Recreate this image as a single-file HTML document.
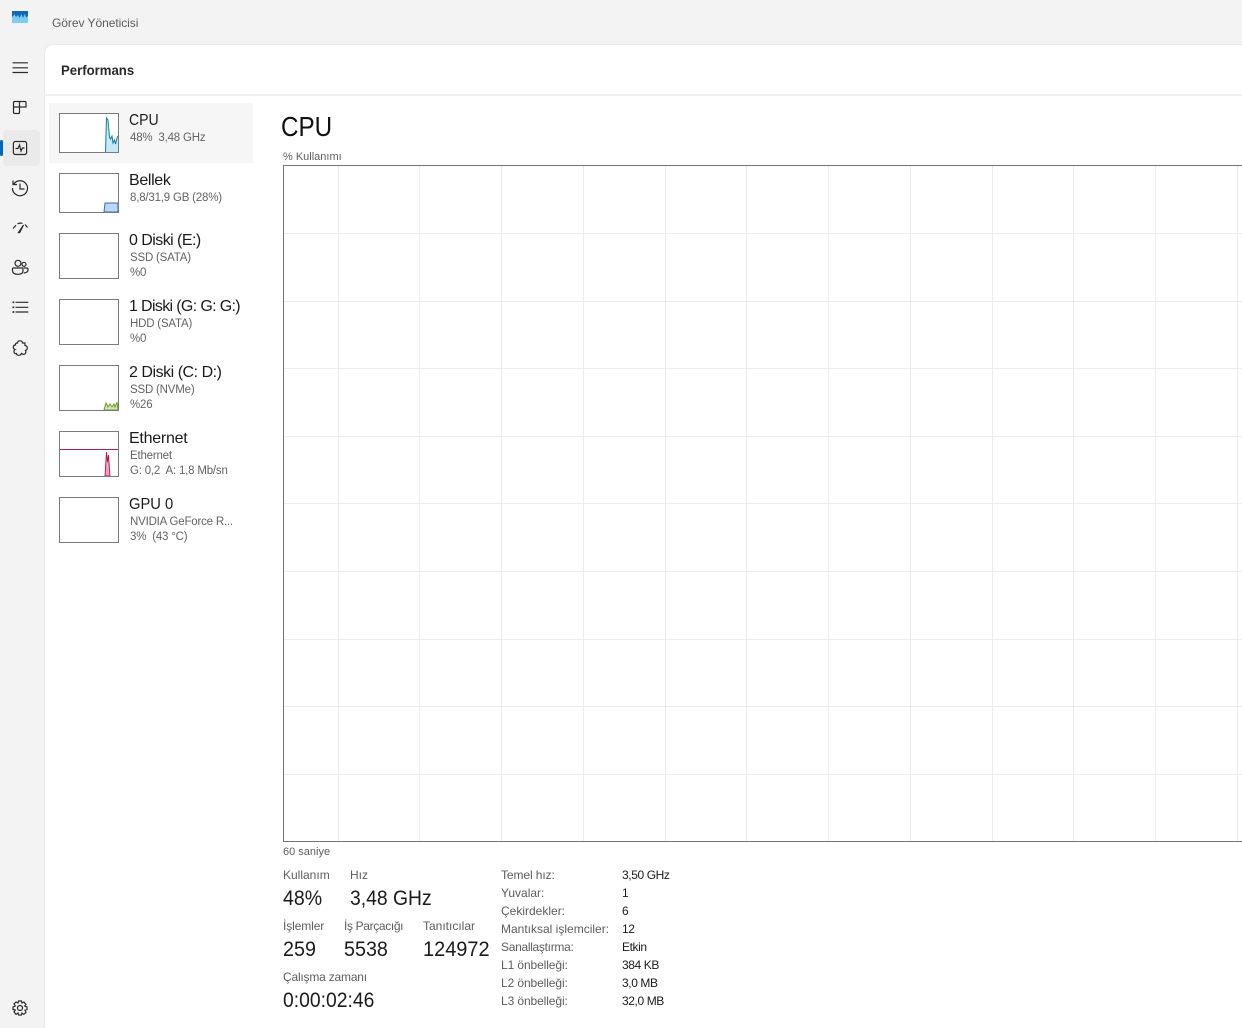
<!DOCTYPE html>
<html lang="tr"><head><meta charset="utf-8"><title>Görev Yöneticisi</title>
<style>
html,body{margin:0;padding:0;width:1242px;height:1028px;overflow:hidden;background:#f3f3f3}
body{position:relative;font-family:"Liberation Sans","DejaVu Sans",sans-serif;color:#1a1a1a}
.t{position:absolute;white-space:pre;line-height:1;transform-origin:left center}
.g{color:#636363;font-size:11.500px;letter-spacing:-.2px}
.n{font-size:16px;color:#1b1b1b}
.v{font-size:21px;color:#1b1b1b}
.l{font-size:12px;color:#5d5d5d}
.r{font-size:12px;color:#1b1b1b;letter-spacing:-.4px}
.thumb{position:absolute;left:59px;width:58px;background:#fff;border:1px solid #7a7a7a;overflow:hidden}
#main{position:absolute;left:45px;top:45px;width:1197px;height:983px;background:#fff;border-top-left-radius:8px;box-shadow:0 0 0 1px #e9e9e9}
svg.ic{position:absolute;left:10px;width:20px;height:20px;fill:none;stroke:#2b2b2b;stroke-width:1.2}
</style></head><body>
<svg style="position:absolute;left:12px;top:11px" width="16" height="12" viewBox="0 0 16 12"><rect width="16" height="12" fill="#7ccbf5"/><path d="M0 0H16V5L14 6.500 13 3 11 7 9.500 3 7.500 7 6 4 4 6 2.500 3.500 0 6Z" fill="#1469b5"/></svg>
<span class="t" style="left:52px;top:17px;font-size:12px;color:#5c5c5c;letter-spacing:-.05px">Görev Yöneticisi</span>

<div style="position:absolute;left:3px;top:130px;width:37px;height:36px;background:#eaeaea;border-radius:4px"></div>
<div style="position:absolute;left:0;top:140px;width:3px;height:16px;background:#0067c0;border-radius:2px"></div>

<svg class="ic" style="top:58px" viewBox="0 0 20 20"><path d="M2.500 4.800H18M2.500 9.800H18M2.500 14.500H18"/></svg>
<svg class="ic" style="top:97px" viewBox="0 0 20 20"><path d="M3.500 5.500Q3.500 4.500 5 4.500H15Q16 4.500 16 5.500V10H3.500ZM3.500 10V15.500Q3.500 16.500 5 16.500H8.500Q9.500 16.500 9.500 15.500V4.500"/></svg>
<svg class="ic" style="top:138px" viewBox="0 0 20 20"><rect x="3.400" y="3.500" width="13.200" height="13" rx="2"/><path d="M5.500 10.500H8L9.500 7 11 13 12.500 10H14.500"/></svg>
<svg class="ic" style="top:178px" viewBox="0 0 20 20"><path d="M3 2.500V6.500H7M3.500 6.500A7.500 7.500 0 1 1 2.500 10M10 5.500V11H14.500"/></svg>
<svg class="ic" style="top:217px" viewBox="0 0 20 20"><path d="M3 11.500L6 8.300M7.500 6.800Q10 5.800 12.500 6.300M15 7.500L17.500 10.500M8.500 15.500L9.700 15.500L13.500 8L8.500 15.500Z"/></svg>
<svg class="ic" style="top:258px" viewBox="0 0 20 20"><circle cx="8" cy="5.300" r="3"/><circle cx="14" cy="6.300" r="2"/><path d="M3.500 10H13V13Q13 16.300 8 16.300T2.500 13V11Q2.500 10 3.500 10ZM14 10H16.800Q18 10 18 11.500V12Q18 14.500 13.800 15"/></svg>
<svg class="ic" style="top:298px" viewBox="0 0 20 20"><path d="M5.500 4.300H18.300M5.500 9.300H18.300M5.500 14H18.300"/><path d="M2.500 4.300H4.300M2.500 9.300H4.300M2.500 14H4.300" stroke-width="1.700"/></svg>
<svg class="ic" style="top:338px" viewBox="0 0 20 20"><path d="M7.500 5Q7.500 2.800 10 2.800T12.500 5H15V7.500Q17.300 8 17.300 10T15.500 12.500Q16.500 15 14.800 16T11.500 15.500Q10.500 17.500 8.500 17.300T6.500 15.500Q4.300 16 4 14T5 11.500Q3.300 11 3.300 9T5.500 7Q5 5 7.500 5Z"/></svg>
<svg class="ic" style="top:998px" viewBox="0 0 20 20"><circle cx="10" cy="10" r="2.500"/><path d="M8.500 3H11.500L12 5L14 4L16 6.500L14.700 8L17 9V11.500L15 12L16 14.500L13.800 16.300L12 15L11.500 17H8.500L8 15L6 16.300L4 14L5.300 12L3 11.500V9L5.300 8L4 6L6 4L8 5Z"/></svg>

<div id="main"></div>
<div style="position:absolute;left:45px;top:94px;width:1197px;height:2px;background:#efefef"></div>
<span class="t" style="left:61px;top:63px;font-size:14px;font-weight:bold;color:#2a2a2a;transform:scaleX(.94)">Performans</span>

<div style="position:absolute;left:49px;top:103px;width:204px;height:60px;background:#f6f6f6"></div>

<div class="thumb" style="top:113px;height:38px"><svg width="58" height="38" style="display:block"><path d="M45.500 38L46.500 4 48 6 49.500 23 50.500 25 52 22 53 29 54.500 26 55.500 30 57 24 58 22V38Z" fill="#c6e9f6"/><path d="M45.500 38L46.500 4 48 6 49.500 23 50.500 25 52 22 53 29 54.500 26 55.500 30 57 24 58 22" fill="none" stroke="#117d9c"/></svg></div>
<div class="thumb" style="top:173px;height:38px"><svg width="58" height="38" style="display:block"><path d="M44 38L45 29H58V38Z" fill="#bcd7f5" stroke="#2c6fb5"/></svg></div>
<div class="thumb" style="top:233px;height:44px"></div>
<div class="thumb" style="top:299px;height:44px"></div>
<div class="thumb" style="top:365px;height:44px"><svg width="58" height="44" style="display:block"><path d="M44 44L46 37 48 41 50 38 52 41 54 38 55 41 57 36 58 44Z" fill="#d5e8b4" stroke="#6d9a28"/></svg></div>
<div class="thumb" style="top:431px;height:44px"><svg width="58" height="44" style="display:block"><rect x="0" y="17" width="58" height="1" fill="#b01a66"/><path d="M45 44L46.500 20 47.500 30 48.500 23 50 44Z" fill="#e9a6c4" stroke="#b8144f" stroke-width=".9"/></svg></div>
<div class="thumb" style="top:497px;height:44px"></div>

<span class="t n" style="left:129px;top:113px;transform:scaleX(.88)">CPU</span><span class="t g" style="left:130px;top:133px">48%  3,48 GHz</span>
<span class="t n" style="left:129px;top:173px;letter-spacing:-.35px">Bellek</span><span class="t g" style="left:130px;top:193px">8,8/31,9 GB (28%)</span>
<span class="t n" style="left:129px;top:233px;letter-spacing:-.55px">0 Diski (E:)</span><span class="t g" style="left:130px;top:253px">SSD (SATA)</span><span class="t g" style="left:130px;top:268px">%0</span>
<span class="t n" style="left:129px;top:299px;letter-spacing:-.65px">1 Diski (G: G: G:)</span><span class="t g" style="left:130px;top:319px">HDD (SATA)</span><span class="t g" style="left:130px;top:334px">%0</span>
<span class="t n" style="left:129px;top:365px;letter-spacing:-.47px">2 Diski (C: D:)</span><span class="t g" style="left:130px;top:385px">SSD (NVMe)</span><span class="t g" style="left:130px;top:400px">%26</span>
<span class="t n" style="left:129px;top:431px;letter-spacing:-.25px">Ethernet</span><span class="t g" style="left:130px;top:451px">Ethernet</span><span class="t g" style="left:130px;top:466px">G: 0,2  A: 1,8 Mb/sn</span>
<span class="t n" style="left:129px;top:497px;transform:scaleX(.92)">GPU 0</span><span class="t g" style="left:130px;top:517px">NVIDIA GeForce R...</span><span class="t g" style="left:130px;top:532px">3%  (43 °C)</span>

<span class="t" style="left:281px;top:113px;font-size:28px;color:#111;transform:scaleX(.865)">CPU</span>
<span class="t" style="left:283px;top:152px;font-size:11px;color:#5d5d5d">% Kullanımı</span>

<svg style="position:absolute;left:283px;top:165px" width="959" height="677" viewBox="283 165 959 677">
<path d="M338.500 165V841M419.500 165V841M501.500 165V841M583.500 165V841M665.500 165V841M746.500 165V841M828.500 165V841M910.500 165V841M992.500 165V841M1073.500 165V841M1155.500 165V841M1237.500 165V841M283 233.500H1242M283 301.500H1242M283 368.500H1242M283 436.500H1242M283 503.500H1242M283 571.500H1242M283 639.500H1242M283 706.500H1242M283 774.500H1242" stroke="#ececec" fill="none"/>
<path d="M1242 165.500H283.500V841.500H1242" stroke="#737373" fill="none"/>
</svg>

<span class="t" style="left:283px;top:847px;font-size:11px;color:#5d5d5d">60 saniye</span>
<span class="t l" style="left:283px;top:869px">Kullanım</span><span class="t l" style="left:350px;top:869px">Hız</span>
<span class="t v" style="left:283px;top:888px;transform:scaleX(.93)">48%</span><span class="t v" style="left:350px;top:888px;transform:scaleX(.92)">3,48 GHz</span>
<span class="t l" style="left:283px;top:920px;letter-spacing:-.1px">İşlemler</span><span class="t l" style="left:344px;top:920px;letter-spacing:-.35px">İş Parçacığı</span><span class="t l" style="left:423px;top:920px">Tanıtıcılar</span>
<span class="t v" style="left:283px;top:939px;transform:scaleX(.94)">259</span><span class="t v" style="left:344px;top:939px;transform:scaleX(.94)">5538</span><span class="t v" style="left:423px;top:939px;transform:scaleX(.95)">124972</span>
<span class="t l" style="left:283px;top:971px;letter-spacing:-.2px">Çalışma zamanı</span>
<span class="t v" style="left:283px;top:990px;transform:scaleX(.92)">0:00:02:46</span>

<span class="t l" style="left:501px;top:869px;letter-spacing:-.1px">Temel hız:</span><span class="t r" style="left:622px;top:869px">3,50 GHz</span>
<span class="t l" style="left:501px;top:887px">Yuvalar:</span><span class="t r" style="left:622px;top:887px">1</span>
<span class="t l" style="left:501px;top:905px">Çekirdekler:</span><span class="t r" style="left:622px;top:905px">6</span>
<span class="t l" style="left:501px;top:923px">Mantıksal işlemciler:</span><span class="t r" style="left:622px;top:923px">12</span>
<span class="t l" style="left:501px;top:941px;letter-spacing:-.3px">Sanallaştırma:</span><span class="t r" style="left:622px;top:941px">Etkin</span>
<span class="t l" style="left:501px;top:959px;letter-spacing:-.1px">L1 önbelleği:</span><span class="t r" style="left:622px;top:959px">384 KB</span>
<span class="t l" style="left:501px;top:977px;letter-spacing:-.1px">L2 önbelleği:</span><span class="t r" style="left:622px;top:977px">3,0 MB</span>
<span class="t l" style="left:501px;top:995px;letter-spacing:-.1px">L3 önbelleği:</span><span class="t r" style="left:622px;top:995px">32,0 MB</span>
</body></html>
